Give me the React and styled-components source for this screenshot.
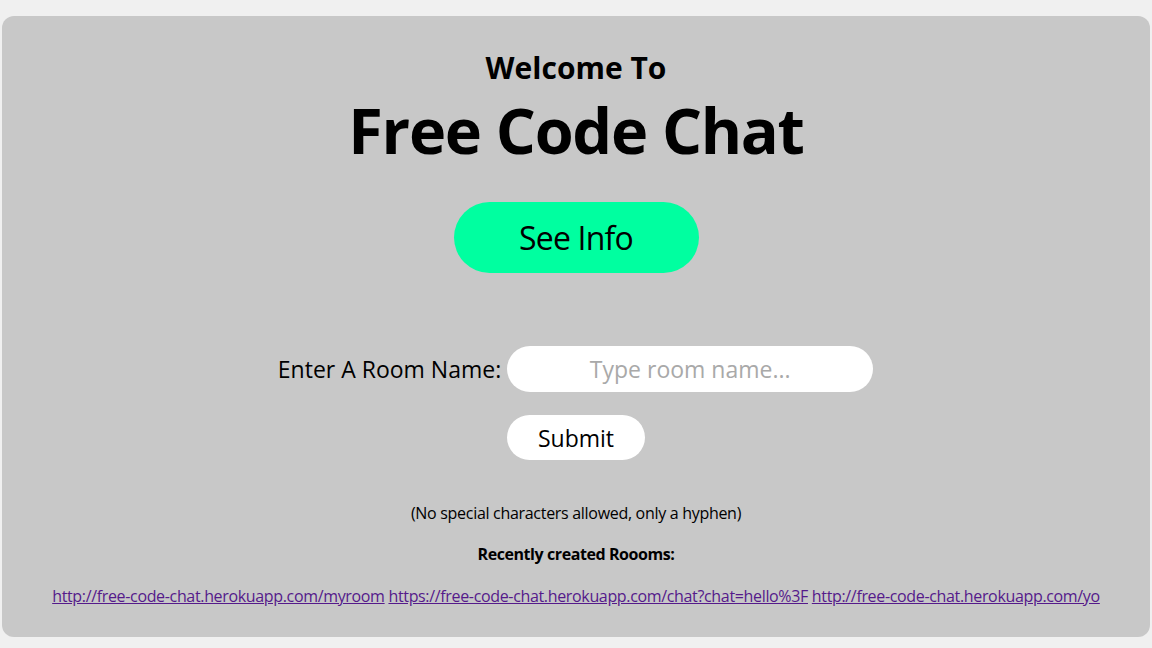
import React from "react";
import styled, { createGlobalStyle } from "styled-components";

const GlobalStyle = createGlobalStyle`
  html, body {
    margin: 0;
    padding: 0;
    background: #f0f0f0;
    font-family: "Open Sans", "Noto Sans", sans-serif;
    color: #000;
  }
  * { box-sizing: border-box; }
`;

const Card = styled.main`
  margin: 16px 2px 11px;
  min-height: 621px;
  background: #c8c8c8;
  border-radius: 12px;
  padding: 32px 0 30px;
  display: flex;
  flex-direction: column;
  align-items: center;
`;

const Welcome = styled.h2`
  margin: 0;
  font-size: 30px;
  line-height: 40px;
  font-weight: 700;
`;

const Title = styled.h1`
  margin: 2px 0 0;
  font-size: 63px;
  line-height: 80px;
  font-weight: 700;
  letter-spacing: -1.3px;
`;

const InfoButton = styled.button`
  margin-top: 32px;
  width: 245px;
  height: 71px;
  border: none;
  border-radius: 36px;
  background: #00ffa0;
  color: #000;
  font-family: inherit;
  font-size: 32px;
  letter-spacing: -0.8px;
  display: flex;
  align-items: center;
  justify-content: center;
  padding: 0;
  cursor: pointer;
`;

const Form = styled.form`
  margin-top: 73px;
  display: flex;
  flex-direction: column;
  align-items: center;
  gap: 23px;
`;

const Row = styled.div`
  display: flex;
  align-items: center;
  gap: 6px;
  margin-right: 1px;
`;

const Label = styled.label`
  font-size: 23px;
  line-height: 30px;
`;

const RoomInput = styled.input`
  width: 366px;
  height: 46px;
  border: none;
  border-radius: 23px;
  background: #fff;
  text-align: center;
  font-family: inherit;
  font-size: 23px;
  color: #000;
  outline: none;
  padding: 0 16px;
  &::placeholder { color: #a9a9a9; }
`;

const SubmitButton = styled.button`
  width: 138px;
  height: 45px;
  border: none;
  border-radius: 23px;
  background: #fff;
  color: #000;
  font-family: inherit;
  font-size: 23px;
  padding: 0;
  cursor: pointer;
`;

const Note = styled.p`
  margin: ${(p) => p.$top}px 0 0;
  font-size: 16px;
  line-height: 22px;
  letter-spacing: ${(p) => (p.$bold ? "-0.42px" : "-0.3px")};
  font-weight: ${(p) => (p.$bold ? 700 : 400)};
`;

const Links = styled.div`
  margin-top: 20px;
  font-size: 16px;
  line-height: 22px;
  letter-spacing: -0.34px;
  text-align: center;
`;

const RoomLink = styled.a`
  color: #551a8b;
  text-decoration: underline;
`;

const rooms = [
  "http://free-code-chat.herokuapp.com/myroom",
  "https://free-code-chat.herokuapp.com/chat?chat=hello%3F",
  "http://free-code-chat.herokuapp.com/yo",
];

export default function App() {
  return (
    <>
      <GlobalStyle />
      <Card>
        <Welcome>Welcome To</Welcome>
        <Title>Free Code Chat</Title>
        <InfoButton type="button">See Info</InfoButton>
        <Form onSubmit={(e) => e.preventDefault()}>
          <Row>
            <Label htmlFor="room">Enter A Room Name:</Label>
            <RoomInput id="room" placeholder="Type room name..." />
          </Row>
          <SubmitButton type="submit">Submit</SubmitButton>
        </Form>
        <Note $top={42}>(No special characters allowed, only a hyphen)</Note>
        <Note $top={19} $bold>Recently created Roooms:</Note>
        <Links>
          {rooms.map((r, i) => (
            <React.Fragment key={r}>
              {i > 0 && " "}
              <RoomLink href={r}>{r}</RoomLink>
            </React.Fragment>
          ))}
        </Links>
      </Card>
    </>
  );
}
